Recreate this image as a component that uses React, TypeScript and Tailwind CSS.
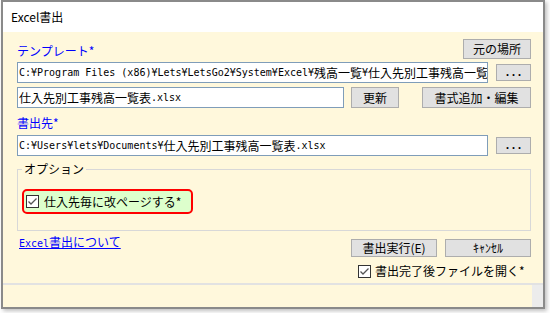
import React from 'react';

const ui = "font-['Noto_Sans_CJK_JP',sans-serif]";

// half-width runs in a mono face, full-width runs in the CJK face (MS Gothic-like)
function Mixed({ text }: { text: string }) {
  const parts = text.match(/[ -~¥]+|[^ -~¥]+/g) || [];
  return (
    <>
      {parts.map((p, i) =>
        /^[ -~¥]/.test(p) ? (
          <span key={i} className="font-['DejaVu_Sans_Mono',monospace] text-[10px]">{p}</span>
        ) : (
          <span key={i} className="font-['Noto_Sans_CJK_JP',sans-serif] text-[12px]">{p}</span>
        )
      )}
    </>
  );
}

function PathBox({ text, className }: { text: string; className: string }) {
  return (
    <div
      className={`flex h-[21px] shrink-0 items-center overflow-hidden whitespace-pre border border-[#7f9db9] bg-white pl-[1px] leading-[14px] text-black ${className}`}
    >
      <Mixed text={text} />
    </div>
  );
}

function Btn({ children, className }: { children: React.ReactNode; className: string }) {
  return (
    <button
      className={`flex shrink-0 items-center justify-center border border-[#adadad] bg-[#e1e1e1] text-[12px] leading-none text-black ${ui} ${className}`}
    >
      {children}
    </button>
  );
}

function Dots() {
  return (
    <Btn className="h-[17px] w-[35px]">
      <span className="font-['DejaVu_Sans_Mono',monospace] text-[10px] font-bold">...</span>
    </Btn>
  );
}

function Check() {
  return (
    <svg width="13" height="13" viewBox="0 0 13 13" className="shrink-0">
      <rect x="0.5" y="0.5" width="12" height="12" fill="#fff" stroke="#333" />
      <path d="M2.5 6.5 L5 9 L10.5 3.5" fill="none" stroke="#555" strokeWidth="1.3" />
    </svg>
  );
}

export default function App() {
  return (
    <div className="h-[313px] w-[550px] overflow-hidden bg-white">
      <div className="ml-[1px] flex h-[309px] w-[544px] flex-col border-2 border-[#8a8a8a] shadow-[2px_2px_4px_rgba(0,0,0,0.25)]">
        {/* title bar */}
        <div className={`flex h-[30px] items-center bg-white pl-[8px] text-[12px] text-black ${ui}`}>Excel書出</div>

        {/* body */}
        <div className={`flex flex-1 flex-col bg-[#fff8dc] pl-[14px] pr-[12px] ${ui}`}>
          <div className="mt-[7px] flex h-[20px] items-end justify-between">
            <span className="text-[12px] leading-[16px] text-[#0000ff]">テンプレート*</span>
            <Btn className="h-[20px] w-[68px]">元の場所</Btn>
          </div>

          <div className="mt-[3px] flex h-[21px] items-center">
            <PathBox
              className="w-[471px]"
              text="C:¥Program Files (x86)¥Lets¥LetsGo2¥System¥Excel¥残高一覧¥仕入先別工事残高一覧"
            />
            <div className="ml-[8px]">
              <Dots />
            </div>
          </div>

          <div className="mt-[4px] flex h-[21px] items-center">
            <PathBox className="w-[327px]" text="仕入先別工事残高一覧表.xlsx" />
            <Btn className="ml-[7px] h-[21px] w-[48px]">更新</Btn>
            <Btn className="ml-[23px] h-[21px] w-[109px]">書式追加・編集</Btn>
          </div>

          <div className="mt-[7px] h-[16px] text-[12px] leading-[16px] text-[#0000ff]">書出先*</div>

          <div className="mt-[4px] flex h-[21px] items-center">
            <PathBox className="w-[471px]" text="C:¥Users¥lets¥Documents¥仕入先別工事残高一覧表.xlsx" />
            <div className="ml-[8px]">
              <Dots />
            </div>
          </div>

          {/* options group */}
          <fieldset className="mt-[4px] border border-[#d8d8d8] pb-[16px] pl-[4px]">
            <legend className="px-[2px] text-[12px] leading-[18px] text-black">オプション</legend>
            <div className="mt-[11px] flex h-[25px] w-[171px] items-center gap-[5px] rounded-[5px] border-2 border-[#ff0000] bg-[#ddffcc] pl-[2px]">
              <Check />
              <span className="text-[12px] leading-none text-black">仕入先毎に改ページする*</span>
            </div>
          </fieldset>

          <div className="flex justify-between">
            <a className="ml-[2px] mt-[2px] h-[14px] leading-[14px] text-[#0000ff] underline">
              <Mixed text="Excel書出について" />
            </a>
            <div className="flex flex-col">
              <div className="mt-[8px] flex gap-[8px]">
                <Btn className="h-[18px] w-[86px]">書出実行(E)</Btn>
                <Btn className="h-[18px] w-[86px]">ｷｬﾝｾﾙ</Btn>
              </div>
              <div className="mt-[6px] flex h-[16px] items-center gap-[4px] pl-[7px]">
                <Check />
                <span className="text-[12px] leading-none text-black">書出完了後ファイルを開く*</span>
              </div>
            </div>
          </div>
        </div>

        {/* status bar */}
        <div className="h-[2px] bg-[#e2e2e2]" />
        <div className="flex h-[22px] bg-[#fff8dc]">
          <div className="flex-1" />
          <div className="w-[11px] bg-[#ececec]" />
        </div>
      </div>
    </div>
  );
}
